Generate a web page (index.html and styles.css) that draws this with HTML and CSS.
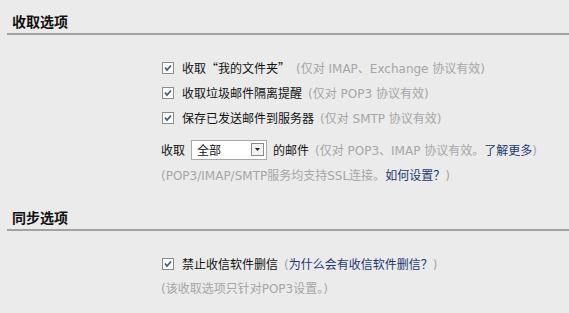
FILE: index.html
```html
<!DOCTYPE html>
<html lang="zh-CN">
<head>
  <meta charset="UTF-8">
  <title>收取选项</title>
  <link rel="stylesheet" href="styles.css">
</head>
<body>
  <div class="title first">收取选项</div>
  <div class="options">
    <div class="row">
      <span class="check"><svg width="12" height="12" viewBox="0 0 12 12"><rect x="0.5" y="0.5" width="11" height="11" fill="#fff" stroke="#8a8a8a"/><path d="M3 5.5 L5 8 L9 3.5" fill="none" stroke="#4a5e7e" stroke-width="1.8"/></svg></span>
      <span class="label">收取“我的文件夹”</span>
      <span class="tip">(仅对 IMAP、Exchange 协议有效)</span>
    </div>
    <div class="row">
      <span class="check"><svg width="12" height="12" viewBox="0 0 12 12"><rect x="0.5" y="0.5" width="11" height="11" fill="#fff" stroke="#8a8a8a"/><path d="M3 5.5 L5 8 L9 3.5" fill="none" stroke="#4a5e7e" stroke-width="1.8"/></svg></span>
      <span class="label">收取垃圾邮件隔离提醒</span>
      <span class="tip">(仅对 POP3 协议有效)</span>
    </div>
    <div class="row">
      <span class="check"><svg width="12" height="12" viewBox="0 0 12 12"><rect x="0.5" y="0.5" width="11" height="11" fill="#fff" stroke="#8a8a8a"/><path d="M3 5.5 L5 8 L9 3.5" fill="none" stroke="#4a5e7e" stroke-width="1.8"/></svg></span>
      <span class="label">保存已发送邮件到服务器</span>
      <span class="tip">(仅对 SMTP 协议有效)</span>
    </div>
    <div class="row select-row">
      <span class="label">收取</span>
      <span class="select"><span class="value">全部</span><span class="arrow"><svg width="13" height="13" viewBox="0 0 13 13"><rect x="0.5" y="0.5" width="12" height="12" fill="#f2f2f2" stroke="#8a8a8a"/><path d="M4 5 L9 5 L6.5 8 Z" fill="#222"/></svg></span></span>
      <span class="label">的邮件</span>
      <span class="tip">(仅对 POP3、IMAP 协议有效。<a href="javascript:;">了解更多</a>)</span>
    </div>
    <div class="note">(POP3/IMAP/SMTP服务均支持SSL连接。<a href="javascript:;">如何设置？</a>)</div>
  </div>
  <div class="title second">同步选项</div>
  <div class="options">
    <div class="row">
      <span class="check"><svg width="12" height="12" viewBox="0 0 12 12"><rect x="0.5" y="0.5" width="11" height="11" fill="#fff" stroke="#8a8a8a"/><path d="M3 5.5 L5 8 L9 3.5" fill="none" stroke="#4a5e7e" stroke-width="1.8"/></svg></span>
      <span class="label">禁止收信软件删信</span>
      <span class="tip">(<a href="javascript:;">为什么会有收信软件删信？</a>)</span>
    </div>
    <div class="note small">(该收取选项只针对POP3设置。)</div>
  </div>
</body>
</html>
```

FILE: styles.css
```css
*{
  margin: 0;
  padding: 0;
}
body{
  background: #ebebeb;
  font-family: "DejaVu Sans", "Noto Sans CJK SC", sans-serif;
  font-size: 12px;
  color: #111;
}
a{
  color: #1c3a6e;
  text-decoration: none;
}
.title{
  margin-left: 7px;
  padding: 11px 0 2px 5px;
  line-height: 20px;
  font-family: "Noto Sans CJK SC", sans-serif;
  font-size: 14px;
  font-weight: bold;
  border-bottom: 2px solid #a2a2a2;
}
.title.second{
  margin-top: 21px;
  padding-top: 0;
}
.options{
  padding: 20px 0 0 161px;
}
.row{
  display: flex;
  align-items: center;
  height: 25px;
  white-space: nowrap;
}
.check{
  display: flex;
  width: 12px;
  height: 12px;
  margin: 0 8px 0 1px;
}
.label{
  font-family: "Noto Sans CJK SC", sans-serif;
}
.tip{
  margin-left: 6px;
  color: #a6a6a6;
}
.select-row{
  margin-top: 7px;
}
.select{
  box-sizing: border-box;
  display: flex;
  align-items: center;
  justify-content: space-between;
  width: 76px;
  height: 20px;
  margin: 0 6px;
  padding: 0 2px 0 5px;
  background: #fff;
  border: 1px solid #a8a8a8;
  font-family: "Noto Sans CJK SC", sans-serif;
}
.arrow{
  display: flex;
}
.note{
  margin-top: 4px;
  line-height: 20px;
  color: #a6a6a6;
}
.note.small{
  margin-top: 3px;
}
```
